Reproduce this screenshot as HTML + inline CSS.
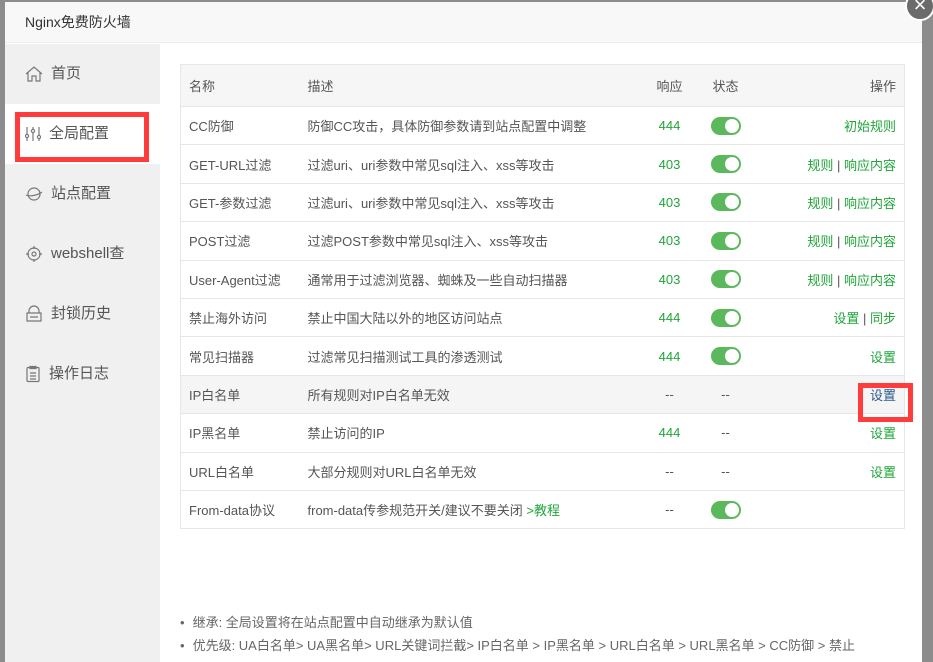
<!DOCTYPE html>
<html><head><meta charset="utf-8"><style>
*{margin:0;padding:0;box-sizing:border-box}
body{width:933px;height:656px;overflow:hidden;background:#8c8c8c;font-family:"Liberation Sans","Noto Sans CJK SC",sans-serif;font-size:13px;color:#555;position:relative}
.dlg{position:absolute;left:5px;top:2px;width:917px;height:660px;background:#fff}
.title{height:41px;background:#f8f8f8;border-bottom:1px solid #eee;line-height:41px;padding-left:20px;font-size:14px;color:#333}
.side{position:absolute;left:0;top:42px;width:155px;bottom:0;background:#f0f0f0}
.side div{height:60px;line-height:60px;padding-left:20px;font-size:15px;color:#555;display:flex;align-items:center}
.side div svg{margin-right:8px}
.side .act{background:#fff}
.tbl{position:absolute;left:175px;top:62px;width:725px;border:1px solid #e6e6e6;border-collapse:collapse}
.tbl td{border-top:1px solid #e6e6e6;height:38.4px;padding:0 8px;white-space:nowrap}
.tbl tr.h td{background:#f6f6f6;height:42px;border-top:none}
.tbl tr.g td{background:#f5f5f5}
.gr{color:#20a53a}
.c{text-align:center}.r{text-align:right}
.tg{display:inline-block;width:30px;height:18px;border-radius:9px;background:#5cb85c;position:relative;vertical-align:middle}
.tg:after{content:"";position:absolute;right:2px;top:2px;width:14px;height:14px;border-radius:50%;background:#fff}
.red{position:absolute;border:5px solid #ff3b3b}
.notes{position:absolute;left:175px;font-size:13px;color:#666;line-height:23px}
.notes div:before{content:"•";margin-right:8px}
.close{position:absolute;left:905px;top:-9px;width:30px;height:30px;border-radius:50%;background:#6b6b6b;border:2px solid #fff;color:#fff;text-align:center;line-height:24px;font-size:22px}
</style></head><body>
<div class="dlg">
<div class="title">Nginx免费防火墙</div>
<div class="side">
<div><svg width="18" height="16" viewBox="0 0 18 16" fill="none" stroke="#777" stroke-width="1.2"><path d="M1 8L9 1l8 7M3 6.5V15h4v-5h4v5h4V6.5"/></svg>首页</div>
<div class="act"><svg width="16" height="16" viewBox="0 0 16 16" fill="none" stroke="#777" stroke-width="1.2"><path d="M2 1v14M8 1v14M14 1v14"/><circle cx="2" cy="10" r="1.6" fill="#fff"/><circle cx="8" cy="5" r="1.6" fill="#fff"/><circle cx="14" cy="11" r="1.6" fill="#fff"/></svg>全局配置</div>
<div><svg width="18" height="16" viewBox="0 0 18 16" fill="none" stroke="#777" stroke-width="1.2"><circle cx="9" cy="8" r="6"/><path d="M1 9c4 2 12 0 16-3"/></svg>站点配置</div>
<div><svg width="18" height="18" viewBox="0 0 18 18" fill="none" stroke="#777" stroke-width="1.2"><circle cx="9" cy="9" r="6"/><circle cx="9" cy="9" r="2"/><path d="M9 1v3M9 14v3M1 9h3M14 9h3"/></svg>webshell查</div>
<div><svg width="18" height="18" viewBox="0 0 18 18" fill="none" stroke="#777" stroke-width="1.2"><path d="M4 8V6a5 5 0 0110 0v2M2 8h14v8H2zM5 12h8"/></svg>封锁历史</div>
<div><svg width="16" height="18" viewBox="0 0 16 18" fill="none" stroke="#777" stroke-width="1.2"><rect x="2" y="2.5" width="12" height="14" rx="1"/><path d="M5 1.5h6v2H5zM5 8h6M5 11h6M5 14h6"/></svg>操作日志</div>
</div>
<table class="tbl">
<tr class="h"><td style="width:119px">名称</td><td style="width:330px">描述</td><td class="c" style="width:80px">响应</td><td class="c" style="width:32px;padding:0">状态</td><td class="r">操作</td></tr>
<tr><td>CC防御</td><td>防御CC攻击，具体防御参数请到站点配置中调整</td><td class="c gr">444</td><td class="c" style="padding:0"><span class="tg"></span></td><td class="r gr">初始规则</td></tr>
<tr><td>GET-URL过滤</td><td>过滤uri、uri参数中常见sql注入、xss等攻击</td><td class="c gr">403</td><td class="c" style="padding:0"><span class="tg"></span></td><td class="r gr">规则 <span style="color:#555">|</span> 响应内容</td></tr>
<tr><td>GET-参数过滤</td><td>过滤uri、uri参数中常见sql注入、xss等攻击</td><td class="c gr">403</td><td class="c" style="padding:0"><span class="tg"></span></td><td class="r gr">规则 <span style="color:#555">|</span> 响应内容</td></tr>
<tr><td>POST过滤</td><td>过滤POST参数中常见sql注入、xss等攻击</td><td class="c gr">403</td><td class="c" style="padding:0"><span class="tg"></span></td><td class="r gr">规则 <span style="color:#555">|</span> 响应内容</td></tr>
<tr><td>User-Agent过滤</td><td>通常用于过滤浏览器、蜘蛛及一些自动扫描器</td><td class="c gr">403</td><td class="c" style="padding:0"><span class="tg"></span></td><td class="r gr">规则 <span style="color:#555">|</span> 响应内容</td></tr>
<tr><td>禁止海外访问</td><td>禁止中国大陆以外的地区访问站点</td><td class="c gr">444</td><td class="c" style="padding:0"><span class="tg"></span></td><td class="r gr">设置 <span style="color:#555">|</span> 同步</td></tr>
<tr><td>常见扫描器</td><td>过滤常见扫描测试工具的渗透测试</td><td class="c gr">444</td><td class="c" style="padding:0"><span class="tg"></span></td><td class="r gr">设置</td></tr>
<tr class="g"><td>IP白名单</td><td>所有规则对IP白名单无效</td><td class="c">--</td><td class="c" style="padding:0">--</td><td class="r" style="color:#2a5a8a">设置</td></tr>
<tr><td>IP黑名单</td><td>禁止访问的IP</td><td class="c gr">444</td><td class="c" style="padding:0">--</td><td class="r gr">设置</td></tr>
<tr><td>URL白名单</td><td>大部分规则对URL白名单无效</td><td class="c">--</td><td class="c" style="padding:0">--</td><td class="r gr">设置</td></tr>
<tr><td>From-data协议</td><td>from-data传参规范开关/建议不要关闭 <span class="gr">&gt;教程</span></td><td class="c">--</td><td class="c" style="padding:0"><span class="tg"></span></td><td class="r"></td></tr>
</table>
<div class="notes" style="top:609px"><div>继承: 全局设置将在站点配置中自动继承为默认值</div><div>优先级: UA白名单&gt; UA黑名单&gt; URL关键词拦截&gt; IP白名单 &gt; IP黑名单 &gt; URL白名单 &gt; URL黑名单 &gt; CC防御 &gt; 禁止</div></div>
</div>
<div class="red" style="left:15px;top:112px;width:134px;height:50px"></div>
<div class="red" style="left:858px;top:383px;width:55px;height:39px"></div>
<div class="close">×</div>
</body></html>
